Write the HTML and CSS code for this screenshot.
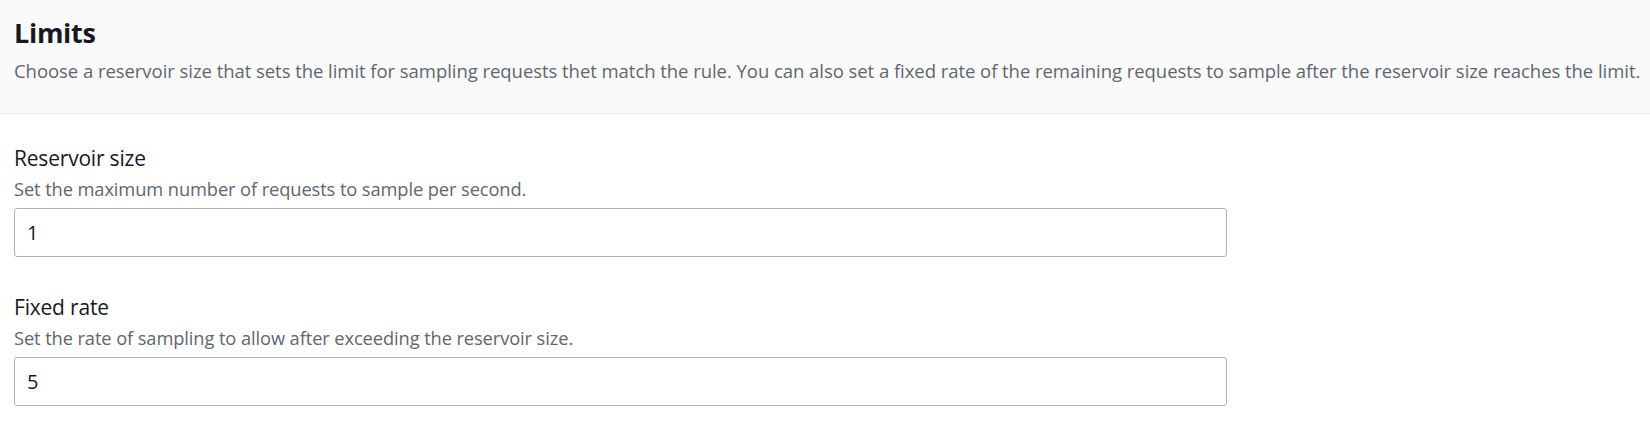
FILE: index.html
```html
<!DOCTYPE html>
<html>
<head>
<meta charset="utf-8">
<link rel="stylesheet" href="styles.css">
</head>
<body>
<div class="panel">
  <div class="panel-header">
    <h2 class="title">Limits</h2>
    <p class="subtitle">Choose a reservoir size that sets the limit for sampling requests thet match the rule. You can also set a fixed rate of the remaining requests to sample after the reservoir size reaches the limit.</p>
  </div>
  <div class="panel-body">
    <div class="field">
      <label class="field-label">Reservoir size</label>
      <div class="field-desc">Set the maximum number of requests to sample per second.</div>
      <div class="input">1</div>
    </div>
    <div class="field">
      <label class="field-label">Fixed rate</label>
      <div class="field-desc">Set the rate of sampling to allow after exceeding the reservoir size.</div>
      <div class="input">5</div>
    </div>
  </div>
</div>
</body>
</html>
```
FILE: styles.css
```css
html, body {
  margin: 0;
  padding: 0;
  background: #ffffff;
  overflow: hidden;
}
body {
  font-family: "Open Sans", Lato, sans-serif;
  color: #16191f;
}
.panel-header {
  background: #fafafa;
  border-bottom: 1px solid #eaeded;
  height: 114px;
  box-sizing: border-box;
  padding: 16px 14px 0 14px;
}
.title {
  margin: 0;
  font-size: 27px;
  line-height: 34px;
  font-weight: 700;
  color: #16191f;
  letter-spacing: -0.3px;
}
.subtitle {
  margin: 9px 0 0 0;
  font-size: 18.5px;
  line-height: 24px;
  color: #5f6670;
  letter-spacing: -0.05px;
  white-space: nowrap;
}
.panel-body {
  display: flex;
  flex-direction: column;
  gap: 37px;
  padding: 31px 14px 0 14px;
}
.field {
  display: flex;
  flex-direction: column;
}
.field-label {
  font-size: 21px;
  line-height: 26px;
  font-weight: 500;
  color: #16191f;
  letter-spacing: -0.2px;
}
.field-desc {
  margin-top: 6px;
  font-size: 18.3px;
  line-height: 24px;
  color: #5f6670;
  letter-spacing: -0.1px;
}
.input {
  margin-top: 7px;
  width: 1213px;
  height: 49px;
  box-sizing: border-box;
  border: 1px solid #aab7b8;
  border-radius: 3px;
  padding: 0 12px;
  display: flex;
  align-items: center;
  font-size: 20px;
  font-weight: 500;
  color: #16191f;
}
```
